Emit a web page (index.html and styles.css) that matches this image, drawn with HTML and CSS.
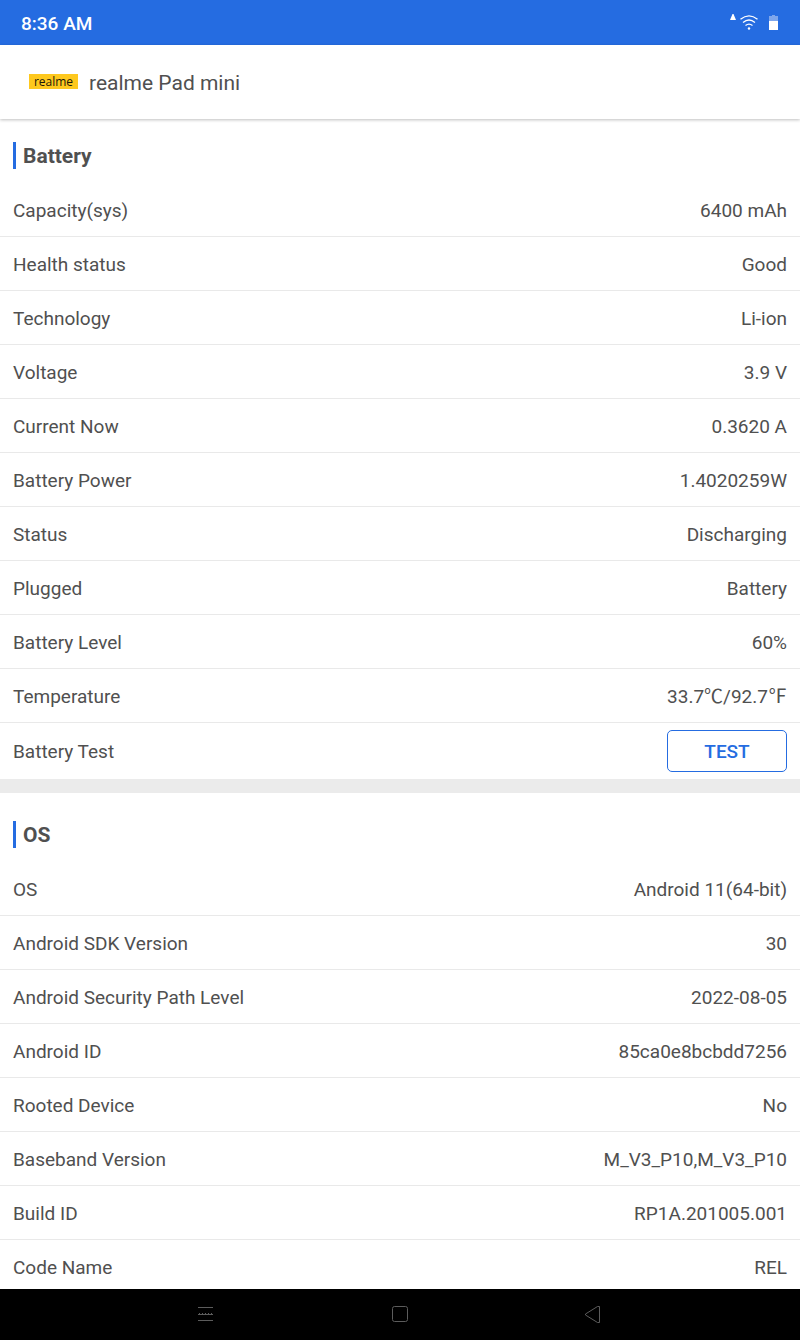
FILE: index.html
```html
<!DOCTYPE html>
<html lang="en">
<head>
<meta charset="utf-8">
<meta name="viewport" content="width=device-width, initial-scale=1">
<title>realme Pad mini</title>
<link rel="stylesheet" href="styles.css">
</head>
<body>
<div class="status-bar">
  <time class="clock">8:36 AM</time>
  <div class="status-icons">
    <svg class="wifi" width="30" height="18" viewBox="0 0 30 18" fill="none" stroke="#fff" stroke-width="1.3" aria-label="Wi-Fi">
      <path d="M1 7 3.500 1h1L7 7z" fill="#fff" stroke="none"/>
      <path d="M11.500 6.300Q20 -.7 28.500 6.300M14 9.500Q20 4.500 26 9.500M16.500 12.500Q20 9.800 23.500 12.500"/>
      <circle cx="20" cy="15.500" r="1.200" fill="#fff" stroke="none"/>
    </svg>
    <svg class="battery" width="9" height="15" viewBox="0 0 9 15" aria-label="Battery 60%">
      <path d="M0 1h3V0h3v1h3v5H0z" fill="#7ea6ec"/>
      <path d="M0 6h9v9H0z" fill="#fff"/>
    </svg>
  </div>
</div>
<header class="app-header">
  <span class="brand">realme</span>
  <h1 class="device">realme Pad mini</h1>
</header>
<main class="content">
  <section class="section">
    <h2 class="section-title">Battery</h2>
    <table class="specs">
      <tr><th scope="row">Capacity(sys)</th><td>6400 mAh</td></tr>
      <tr><th scope="row">Health status</th><td>Good</td></tr>
      <tr><th scope="row">Technology</th><td>Li-ion</td></tr>
      <tr><th scope="row">Voltage</th><td>3.9 V</td></tr>
      <tr><th scope="row">Current Now</th><td>0.3620 A</td></tr>
      <tr><th scope="row">Battery Power</th><td>1.4020259W</td></tr>
      <tr><th scope="row">Status</th><td>Discharging</td></tr>
      <tr><th scope="row">Plugged</th><td>Battery</td></tr>
      <tr><th scope="row">Battery Level</th><td>60%</td></tr>
      <tr><th scope="row">Temperature</th><td>33.7℃/92.7℉</td></tr>
      <tr class="action-row"><th scope="row">Battery Test</th><td><button class="test-button" type="button">TEST</button></td></tr>
    </table>
  </section>
  <section class="section">
    <h2 class="section-title">OS</h2>
    <table class="specs">
      <tr><th scope="row">OS</th><td>Android 11(64-bit)</td></tr>
      <tr><th scope="row">Android SDK Version</th><td>30</td></tr>
      <tr><th scope="row">Android Security Path Level</th><td>2022-08-05</td></tr>
      <tr><th scope="row">Android ID</th><td>85ca0e8bcbdd7256</td></tr>
      <tr><th scope="row">Rooted Device</th><td>No</td></tr>
      <tr><th scope="row">Baseband Version</th><td>M_V3_P10,M_V3_P10</td></tr>
      <tr><th scope="row">Build ID</th><td>RP1A.201005.001</td></tr>
      <tr><th scope="row">Code Name</th><td>REL</td></tr>
    </table>
  </section>
</main>
<nav class="nav-bar" aria-label="System navigation">
  <button class="nav-button" type="button" aria-label="Recent apps">
    <svg width="18" height="18" viewBox="0 0 18 18" fill="none" stroke="#5c5c5c">
      <path d="M1 2.500h15M1 9.500h15M1 15.500h15"/>
      <path d="M2 8.500h14" stroke-dasharray="1 2"/>
    </svg>
  </button>
  <button class="nav-button" type="button" aria-label="Home">
    <svg width="18" height="18" viewBox="0 0 18 18" fill="none" stroke="#5c5c5c">
      <rect x="1.500" y="1.500" width="15" height="15" rx="2"/>
    </svg>
  </button>
  <button class="nav-button" type="button" aria-label="Back">
    <svg width="18" height="18" viewBox="0 0 18 18" fill="none" stroke="#5c5c5c">
      <path d="M13.500 1.500v16h-2L-.5 10V9l12-7.500z" stroke-linejoin="round" transform="translate(1)"/>
    </svg>
  </button>
</nav>
</body>
</html>
```
FILE: styles.css
```css
* {
  box-sizing: border-box;
}

body {
  margin: 0;
  height: 100vh;
  display: flex;
  flex-direction: column;
  background: #fff;
  color: #505050;
  font-family: Roboto, "Noto Sans CJK SC", sans-serif;
  font-size: 19px;
  line-height: 24px;
}

.status-bar {
  flex: none;
  display: flex;
  align-items: center;
  justify-content: space-between;
  height: 45px;
  padding: 0 22px 0 21px;
  background: #256ce1;
  color: #fff;
}

.clock {
  padding-top: 2px;
  font-weight: 500;
}

.status-icons {
  display: flex;
  align-items: center;
  gap: 10px;
  padding-bottom: 1px;
}

.app-header {
  flex: none;
  display: flex;
  align-items: center;
  gap: 11px;
  height: 74px;
  padding: 0 29px;
  background: #fff;
  box-shadow: 0 1px 3px rgba(0, 0, 0, 0.25);
  z-index: 1;
}

.brand {
  width: 49px;
  margin-bottom: 2px;
  background: #fec81e;
  color: #1c1808;
  font-family: "Open Sans", sans-serif;
  font-size: 12px;
  line-height: 15px;
  text-align: center;
}

.device {
  margin: 0;
  padding-top: 2px;
  font-size: 21px;
  font-weight: 400;
}

.content {
  flex: 1;
  min-height: 0;
  overflow-y: auto;
  scrollbar-width: none;
}

.section {
  padding-top: 28px;
}

.section:first-child {
  padding-top: 23px;
}

.section + .section {
  border-top: 14px solid #ebebeb;
}

.section-title {
  margin: 0 13px 14px;
  padding: 2px 0 0 7px;
  border-left: 3px solid #256ce1;
  font-size: 21px;
  font-weight: 700;
  line-height: 25px;
}

.specs {
  width: 100%;
  border-collapse: separate;
  border-spacing: 0;
}

.specs th,
.specs td {
  height: 54px;
  padding: 2px 13px 0;
  border-bottom: 1px solid #e9e9e9;
  font-weight: 400;
  text-align: left;
}

.specs td {
  text-align: right;
}

.specs .action-row > * {
  height: 56px;
  border-bottom: 0;
}

.specs .action-row td {
  padding-top: 0;
}

.test-button {
  display: block;
  width: 120px;
  height: 42px;
  margin-left: auto;
  padding: 2px 0 0;
  border: 1px solid #256ce1;
  border-radius: 5px;
  background: #fff;
  color: #256ce1;
  font: inherit;
  font-weight: 500;
}

.nav-bar {
  flex: none;
  display: flex;
  justify-content: center;
  gap: 146px;
  height: 51px;
  padding-bottom: 1px;
  background: #000;
}

.nav-button {
  display: grid;
  place-items: center;
  width: 48px;
  padding: 0;
  border: 0;
  background: none;
}
```
